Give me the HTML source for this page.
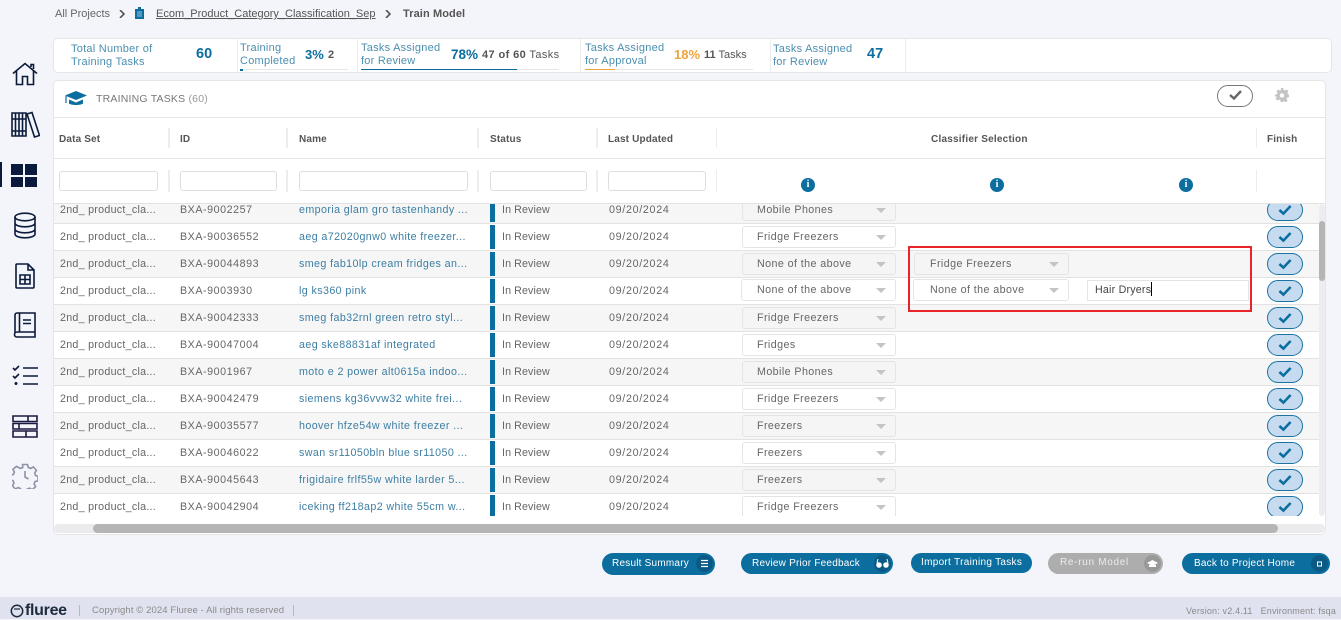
<!DOCTYPE html>
<html><head><meta charset="utf-8">
<style>
*{box-sizing:border-box}
html,body{margin:0;padding:0}
body{width:1341px;height:619px;overflow:hidden;background:#f4f5fa;font-family:"Liberation Sans",sans-serif;font-size:11px;color:#5f5f5f;position:relative}
.a{position:absolute;white-space:nowrap}
.l{color:#4b8fb0;font-size:11px;line-height:13px;letter-spacing:.25px}
.b{color:#0b6e9e;font-weight:bold}
.hd{font-weight:bold;font-size:10px;color:#555;top:133px;line-height:14px;letter-spacing:.15px}
.sep{position:absolute;width:2px;background:#eceded}
.flt{position:absolute;top:171px;height:20px;background:#fff;border:1px solid #dedede;border-radius:3px}
.row{position:absolute;left:54px;width:1265px;height:27px;border-bottom:1px solid #e2e2e2}
.row.g{background:#f6f6f6}.row.w{background:#fff}
.row span{position:absolute;top:0;line-height:26px;white-space:nowrap;font-size:10.7px;color:#666}
.row span:nth-of-type(1){letter-spacing:.27px}
.row span:nth-of-type(2){letter-spacing:.55px}
.row span:nth-of-type(3){letter-spacing:.4px;color:#3d7ea3}
.row span:nth-of-type(4){letter-spacing:.1px}
.row span:nth-of-type(5){letter-spacing:.7px}
.bar{position:absolute;left:436px;top:1px;width:5px;height:24px;background:#0b6e9e}
.sel{position:absolute;height:22px;border:1px solid #e4e4e4;border-radius:3px;line-height:20px;font-size:10.7px;padding-left:14px;color:#666;white-space:nowrap;letter-spacing:.42px}
.sel:after{content:"";position:absolute;right:9px;top:8px;border-left:5px solid transparent;border-right:5px solid transparent;border-top:5px solid #c4c4c4}
.g .sel{background:#f5f5f5}.w .sel{background:#fff}
.chk{position:absolute;left:1213px;top:2px;width:36px;height:22px;background:#c6dbf0;border:1px solid #1a73a0;border-radius:11px}
.chk svg{position:absolute;left:8px;top:3px;transform:scale(.8)}
.chk path{stroke-width:3.2}
.btn{position:absolute;background:#0b6e9e;color:#fff;border-radius:11px;font-size:10px;line-height:22px;height:21px;padding-left:10px;white-space:nowrap;letter-spacing:.22px}
.btn i{position:absolute;right:2px;top:2px;width:17px;height:17px;border-radius:50%;background:#0a5a85}
.inf{position:absolute;top:178px;width:14px;height:14px;border-radius:50%;background:#0b6e9e;color:#fff;font:bold 10px/14px "Liberation Serif",serif;text-align:center}
svg{display:block}
.ic{position:absolute;fill:none;stroke:#0a1a3a;stroke-width:1.6}
</style></head><body>

<div class="a" style="left:55px;top:7px;line-height:14px;font-size:11px;color:#666">All Projects</div>
<svg class="a" style="left:119px;top:10px" width="7" height="8"><path d="M1 0l4 4-4 4" fill="none" stroke="#555" stroke-width="1.6"/></svg>
<svg class="a" style="left:135px;top:7px" width="9" height="12"><path d="M0 2h3V0h3v2h3v10H0z" fill="#0b6e9e"/><path d="M2 5h5M2 7h5M2 9h5" stroke="#cfe3ee" stroke-width=".7"/></svg>
<div class="a" style="left:156px;top:7px;line-height:14px;font-size:11px;color:#555;text-decoration:underline">Ecom_Product_Category_Classification_Sep</div>
<svg class="a" style="left:385px;top:10px" width="7" height="8"><path d="M1 0l4 4-4 4" fill="none" stroke="#555" stroke-width="1.6"/></svg>
<div class="a" style="left:403px;top:7px;line-height:14px;font-size:11px;font-weight:bold;color:#555;letter-spacing:.1px">Train Model</div>

<div class="a" style="left:53px;top:38px;width:1279px;height:35px;background:#fff;border:1px solid #e6e6e6;border-radius:5px"></div>
<div class="sep" style="left:237px;top:39px;height:33px;width:1px"></div>
<div class="sep" style="left:357px;top:39px;height:33px;width:1px"></div>
<div class="sep" style="left:580px;top:39px;height:33px;width:1px"></div>
<div class="sep" style="left:770px;top:39px;height:33px;width:1px"></div>
<div class="sep" style="left:905px;top:39px;height:33px;width:1px"></div>

<div class="a l" style="left:71px;top:43px">Total Number of<br>Training Tasks</div>
<div class="a b" style="left:196px;top:47px;font-size:14.5px;line-height:15px">60</div>
<div class="a l" style="left:240px;top:42px">Training<br>Completed</div>
<div class="a b" style="left:305px;top:47px;font-size:13px;line-height:15px">3%</div>
<div class="a" style="left:328px;top:49px;font-size:11px;font-weight:bold;color:#555">2</div>
<div class="a" style="left:240px;top:69px;width:108px;height:1px;background:#e6e6e6"></div>
<div class="a" style="left:240px;top:69px;width:3px;height:2px;background:#0b6e9e"></div>
<div class="a l" style="left:361px;top:42px">Tasks Assigned<br>for Review</div>
<div class="a b" style="left:451px;top:47px;font-size:13.5px;line-height:15px">78%</div>
<div class="a" style="left:482px;top:49px;font-size:11px;line-height:13px;color:#555;letter-spacing:.4px"><b>47 of 60</b> Tasks</div>
<div class="a" style="left:361px;top:69px;width:198px;height:1px;background:#e6e6e6"></div>
<div class="a" style="left:361px;top:69px;width:156px;height:1px;background:#0b6e9e"></div>
<div class="a l" style="left:585px;top:42px">Tasks Assigned<br>for Approval</div>
<div class="a" style="left:674px;top:47px;font-size:13px;line-height:15px;font-weight:bold;color:#eda33f">18%</div>
<div class="a" style="left:704px;top:49px;font-size:11px;line-height:13px;color:#555"><b>11</b> Tasks</div>
<div class="a" style="left:585px;top:69px;width:168px;height:1px;background:#e6e6e6"></div>
<div class="a" style="left:585px;top:69px;width:30px;height:1px;background:#eda33f"></div>
<div class="a l" style="left:773px;top:43px">Tasks Assigned<br>for Review</div>
<div class="a b" style="left:867px;top:47px;font-size:14.5px;line-height:15px">47</div>

<!-- sidebar -->
<svg class="ic" style="left:12px;top:62px" width="26" height="24" viewBox="0 0 26 24"><path d="M1 11.5L13 1.5l12 10M4.5 9v13.5h6v-8h5v8h6V9M19 5V2.5h2.5V7"/></svg>
<svg class="ic" style="left:10px;top:111px" width="30" height="27" viewBox="0 0 30 27"><path d="M2 2h7v23H2zM9 2h7v23H9zM2 8h14M2 20h14M5.500 2v23M12.500 2v23M17 3l5-1.500 7.500 23-5 1.500z"/></svg>
<div class="a" style="left:0;top:162px;width:2px;height:25px;background:#0a1a3a"></div>
<div class="a" style="left:11px;top:164px;width:12px;height:11px;background:#0a1a3a"></div>
<div class="a" style="left:25px;top:164px;width:12px;height:11px;background:#0a1a3a"></div>
<div class="a" style="left:11px;top:177px;width:12px;height:10px;background:#0a1a3a"></div>
<div class="a" style="left:25px;top:177px;width:12px;height:10px;background:#0a1a3a"></div>
<svg class="ic" style="left:13px;top:212px" width="24" height="27" viewBox="0 0 24 27"><ellipse cx="12" cy="5" rx="10" ry="3.800"/><path d="M2 5v17c0 2.200 4.500 3.800 10 3.800s10-1.600 10-3.800V5M2 11c0 2.200 4.500 3.800 10 3.800S22 13.200 22 11M2 17c0 2.200 4.500 3.800 10 3.800S22 19.200 22 17"/></svg>
<svg class="ic" style="left:15px;top:263px" width="20" height="26" viewBox="0 0 20 26"><path d="M2 1h11l6 6v17a1 1 0 0 1-1 1H2a1 1 0 0 1-1-1V2a1 1 0 0 1 1-1zM13 1v6h6M5 12h10v9H5zM5 16.500h10M10 12v9" /></svg>
<svg class="ic" style="left:13px;top:312px" width="24" height="26" viewBox="0 0 24 26"><path d="M2 21V3a2 2 0 0 1 2-2h18v19H4a2.500 2.500 0 0 0 0 5h18v-5M6.500 1v19M10 8h8M10 11.500h8"/></svg>
<svg class="ic" style="left:12px;top:365px" width="27" height="21" viewBox="0 0 27 21"><path d="M1 3l2 2 4-4M1 11l2 2 4-4M11 3h15M11 11h15M11 19h15"/><circle cx="4" cy="18.500" r="1.500" fill="#0a1a3a" stroke="none"/></svg>
<svg class="ic" style="left:12px;top:415px;stroke:#1a1a40" width="26" height="23" viewBox="0 0 26 23"><path d="M1 1h24v5.500H1zM1 8.500h24V14H1zM1 16h24v6H1zM16 1v5.500M7 8.500V14M14 16v6"/></svg>
<svg class="ic" style="left:12px;top:463px;stroke:#8d92a6" width="26" height="26" viewBox="0 0 26 26"><path d="M10.500 1.500h5l.8 3 2.400 1 2.700-1.600 3 3.500-1.700 2.600.8 2.500 2.500.8v4.500l-2.900.8-1 2.400 1.500 2.700-3.500 3-2.500-1.600-2.500 1-.8 2.400h-5l-.8-2.900-2.400-1-2.700 1.500-3-3.500 1.600-2.500-1-2.500-2.500-.8v-4.500l2.900-.8 1-2.400-1.500-2.700 3.500-3L8.300 5.500l2.500-1zM13 8v6l3.500 2"/></svg>

<!-- main panel -->
<div class="a" style="left:53px;top:80px;width:1273px;height:455px;background:#fff;border:1px solid #e6e6e6;border-radius:5px"></div>
<svg class="a" style="left:64px;top:91px" width="24" height="15" viewBox="0 0 24 15"><path d="M12 0L1 4.500l11 4.500 11-4.500z" fill="#0b6e9e"/><path d="M5 8.500v4c2 2 12 2 14 0v-4l-7 3z" fill="#0b6e9e"/><path d="M2 5v7" stroke="#0b6e9e" stroke-width="1.200"/></svg>
<div class="a" style="left:96px;top:92px;font-size:10.5px;line-height:14px;color:#777;letter-spacing:.2px">TRAINING TASKS <span style="color:#999">(60)</span></div>
<div class="a" style="left:1217px;top:85px;width:36px;height:22px;border:1px solid #777;border-radius:11px;background:#fff"></div>
<svg class="a" style="left:1229px;top:90px" width="13" height="10"><path d="M1 5l4 3.500L12 1" fill="none" stroke="#666" stroke-width="2.400"/></svg>
<svg class="a" style="left:1275px;top:88px" width="14" height="14" viewBox="0 0 16 16"><path d="M6.500 0h3l.4 2.200 1.500.6L13.300 1.600l2 2-1.200 1.900.6 1.500L16 7.500v3l-2.200.400-.6 1.500 1.200 1.900-2 2-1.900-1.200-1.500.6L9.500 16h-3l-.4-2.200-1.500-.6-1.900 1.200-2-2 1.200-1.900-.6-1.500L0 10.500v-3l2.200-.4.6-1.500L1.600 3.700l2-2 1.900 1.200 1.500-.6z" fill="#c4c4c4"/><circle cx="8" cy="8.500" r="2.500" fill="#fff"/></svg>

<div class="a" style="left:54px;top:117px;width:1271px;height:1px;background:#e6e6e6"></div>
<div class="a" style="left:54px;top:158px;width:1271px;height:1px;background:#e6e6e6"></div>
<div class="a" style="left:54px;top:203px;width:1271px;height:1px;background:#e2e2e2"></div>

<div class="a hd" style="left:59px">Data Set</div>
<div class="a hd" style="left:180px">ID</div>
<div class="a hd" style="left:299px">Name</div>
<div class="a hd" style="left:490px">Status</div>
<div class="a hd" style="left:608px">Last Updated</div>
<div class="a hd" style="left:931px;letter-spacing:.22px">Classifier Selection</div>
<div class="a hd" style="left:1267px">Finish</div>

<div class="sep" style="left:168px;top:128px;height:20px"></div><div class="sep" style="left:286px;top:128px;height:20px"></div><div class="sep" style="left:477px;top:128px;height:20px"></div><div class="sep" style="left:596px;top:128px;height:20px"></div><div class="sep" style="left:716px;top:128px;height:20px;width:1px"></div><div class="sep" style="left:1256px;top:128px;height:20px;width:1px"></div>
<div class="sep" style="left:168px;top:170px;height:22px"></div><div class="sep" style="left:286px;top:170px;height:22px"></div><div class="sep" style="left:477px;top:170px;height:22px"></div><div class="sep" style="left:596px;top:170px;height:22px"></div><div class="sep" style="left:716px;top:170px;height:22px;width:1px"></div><div class="sep" style="left:1256px;top:170px;height:22px;width:1px"></div>

<div class="flt" style="left:59px;width:99px"></div>
<div class="flt" style="left:180px;width:97px"></div>
<div class="flt" style="left:299px;width:169px"></div>
<div class="flt" style="left:490px;width:97px"></div>
<div class="flt" style="left:608px;width:98px"></div>
<div class="inf" style="left:801px">i</div><div class="inf" style="left:990px">i</div><div class="inf" style="left:1179px">i</div>

<!-- rows -->
<div class="a" style="left:54px;top:204px;width:1265px;height:312px;overflow:hidden">
<div style="position:absolute;left:-54px;top:-203px;width:1341px;height:619px">
<div class="row g" style="top:196px"><span style="left:6px;top:0">2nd_ product_cla...</span><span style="left:126px">BXA-9002257</span><span style="left:245px">emporia glam gro tastenhandy ...</span><i class="bar"></i><span style="left:448px">In Review</span><span style="left:555px">09/20/2024</span><div class="sel" style="left:688px;top:2px;width:154px">Mobile Phones</div><div class="chk"><svg width="18" height="14"><path d="M2 7l5 4.500L16 2" fill="none" stroke="#0b6e9e" stroke-width="2.600"/></svg></div></div>
<div class="row w" style="top:223px"><span style="left:6px">2nd_ product_cla...</span><span style="left:126px">BXA-90036552</span><span style="left:245px">aeg a72020gnw0 white freezer...</span><i class="bar"></i><span style="left:448px">In Review</span><span style="left:555px">09/20/2024</span><div class="sel" style="left:688px;top:2px;width:154px">Fridge Freezers</div><div class="chk"><svg width="18" height="14"><path d="M2 7l5 4.500L16 2" fill="none" stroke="#0b6e9e" stroke-width="2.600"/></svg></div></div>
<div class="row g" style="top:250px"><span style="left:6px">2nd_ product_cla...</span><span style="left:126px">BXA-90044893</span><span style="left:245px">smeg fab10lp cream fridges an...</span><i class="bar"></i><span style="left:448px">In Review</span><span style="left:555px">09/20/2024</span><div class="sel" style="left:688px;top:2px;width:154px">None of the above</div><div class="sel" style="left:860px;top:2px;width:155px;padding-left:15px">Fridge Freezers</div><div class="chk"><svg width="18" height="14"><path d="M2 7l5 4.500L16 2" fill="none" stroke="#0b6e9e" stroke-width="2.600"/></svg></div></div>
<div class="row w" style="top:277px"><span style="left:6px">2nd_ product_cla...</span><span style="left:126px">BXA-9003930</span><span style="left:245px">lg ks360 pink</span><i class="bar"></i><span style="left:448px">In Review</span><span style="left:555px">09/20/2024</span><div class="sel" style="left:687px;top:1px;width:155px;padding-left:15px">None of the above</div><div class="sel" style="left:859px;top:1px;width:156px;padding-left:16px">None of the above</div><div style="position:absolute;left:1033px;top:2px;width:162px;height:21px;border:1px solid #e4e4e4;background:#fff;padding-left:7px;line-height:19px;font-size:10.7px;color:#444;white-space:nowrap;letter-spacing:.2px">Hair Dryers<b style="display:inline-block;width:1px;height:14px;background:#000;vertical-align:-3px"></b></div><div class="chk"><svg width="18" height="14"><path d="M2 7l5 4.500L16 2" fill="none" stroke="#0b6e9e" stroke-width="2.600"/></svg></div></div>
<div class="row g" style="top:304px"><span style="left:6px">2nd_ product_cla...</span><span style="left:126px">BXA-90042333</span><span style="left:245px">smeg fab32rnl green retro styl...</span><i class="bar"></i><span style="left:448px">In Review</span><span style="left:555px">09/20/2024</span><div class="sel" style="left:688px;top:2px;width:154px">Fridge Freezers</div><div class="chk"><svg width="18" height="14"><path d="M2 7l5 4.500L16 2" fill="none" stroke="#0b6e9e" stroke-width="2.600"/></svg></div></div>
<div class="row w" style="top:331px"><span style="left:6px">2nd_ product_cla...</span><span style="left:126px">BXA-90047004</span><span style="left:245px">aeg ske88831af integrated</span><i class="bar"></i><span style="left:448px">In Review</span><span style="left:555px">09/20/2024</span><div class="sel" style="left:688px;top:2px;width:154px">Fridges</div><div class="chk"><svg width="18" height="14"><path d="M2 7l5 4.500L16 2" fill="none" stroke="#0b6e9e" stroke-width="2.600"/></svg></div></div>
<div class="row g" style="top:358px"><span style="left:6px">2nd_ product_cla...</span><span style="left:126px">BXA-9001967</span><span style="left:245px">moto e 2 power alt0615a indoo...</span><i class="bar"></i><span style="left:448px">In Review</span><span style="left:555px">09/20/2024</span><div class="sel" style="left:688px;top:2px;width:154px">Mobile Phones</div><div class="chk"><svg width="18" height="14"><path d="M2 7l5 4.500L16 2" fill="none" stroke="#0b6e9e" stroke-width="2.600"/></svg></div></div>
<div class="row w" style="top:385px"><span style="left:6px">2nd_ product_cla...</span><span style="left:126px">BXA-90042479</span><span style="left:245px">siemens kg36vvw32 white frei...</span><i class="bar"></i><span style="left:448px">In Review</span><span style="left:555px">09/20/2024</span><div class="sel" style="left:688px;top:2px;width:154px">Fridge Freezers</div><div class="chk"><svg width="18" height="14"><path d="M2 7l5 4.500L16 2" fill="none" stroke="#0b6e9e" stroke-width="2.600"/></svg></div></div>
<div class="row g" style="top:412px"><span style="left:6px">2nd_ product_cla...</span><span style="left:126px">BXA-90035577</span><span style="left:245px">hoover hfze54w white freezer ...</span><i class="bar"></i><span style="left:448px">In Review</span><span style="left:555px">09/20/2024</span><div class="sel" style="left:688px;top:2px;width:154px">Freezers</div><div class="chk"><svg width="18" height="14"><path d="M2 7l5 4.500L16 2" fill="none" stroke="#0b6e9e" stroke-width="2.600"/></svg></div></div>
<div class="row w" style="top:439px"><span style="left:6px">2nd_ product_cla...</span><span style="left:126px">BXA-90046022</span><span style="left:245px">swan sr11050bln blue sr11050 ...</span><i class="bar"></i><span style="left:448px">In Review</span><span style="left:555px">09/20/2024</span><div class="sel" style="left:688px;top:2px;width:154px">Freezers</div><div class="chk"><svg width="18" height="14"><path d="M2 7l5 4.500L16 2" fill="none" stroke="#0b6e9e" stroke-width="2.600"/></svg></div></div>
<div class="row g" style="top:466px"><span style="left:6px">2nd_ product_cla...</span><span style="left:126px">BXA-90045643</span><span style="left:245px">frigidaire frlf55w white larder 5...</span><i class="bar"></i><span style="left:448px">In Review</span><span style="left:555px">09/20/2024</span><div class="sel" style="left:688px;top:2px;width:154px">Freezers</div><div class="chk"><svg width="18" height="14"><path d="M2 7l5 4.500L16 2" fill="none" stroke="#0b6e9e" stroke-width="2.600"/></svg></div></div>
<div class="row w" style="top:493px;height:27px"><span style="left:6px">2nd_ product_cla...</span><span style="left:126px">BXA-90042904</span><span style="left:245px">iceking ff218ap2 white 55cm w...</span><i class="bar"></i><span style="left:448px">In Review</span><span style="left:555px">09/20/2024</span><div class="sel" style="left:688px;top:2px;width:154px;height:26px">Fridge Freezers</div><div class="chk"><svg width="18" height="14"><path d="M2 7l5 4.500L16 2" fill="none" stroke="#0b6e9e" stroke-width="2.600"/></svg></div></div>
</div></div>

<!-- scrollbars -->
<div class="a" style="left:1319px;top:204px;width:6px;height:312px;background:#ededf0;border-radius:3px"></div>
<div class="a" style="left:1319px;top:221px;width:6px;height:60px;background:#b5b5b5;border-radius:3px"></div>
<div class="a" style="left:54px;top:524px;width:1271px;height:9px;background:#ebebee;border-radius:5px"></div>
<div class="a" style="left:93px;top:524px;width:1185px;height:9px;background:#b5b5b5;border-radius:5px"></div>

<!-- red box -->
<div class="a" style="left:908px;top:246px;width:344px;height:66px;border:2px solid #e8262a"></div>

<!-- buttons -->
<div class="btn" style="left:602px;top:553px;width:113px;height:22px;line-height:22px">Result Summary<i><svg width="17" height="17"><path d="M5 5.500h7M5 8.500h7M5 11.500h7" stroke="#fff" stroke-width="1.300"/></svg></i></div>
<div class="btn" style="left:741px;top:553px;width:152px;padding-left:11px">Review Prior Feedback<i><svg width="17" height="17"><circle cx="5" cy="10" r="2.800" fill="#fff"/><circle cx="12" cy="10" r="2.800" fill="#fff"/><path d="M3 8l1-4M14 8l-1-4" stroke="#fff"/></svg></i></div>
<div class="btn" style="left:911px;top:553px;width:121px;height:20px;line-height:20px;letter-spacing:.3px">Import Training Tasks</div>
<div class="btn" style="left:1048px;top:553px;width:115px;background:#adadad;color:#ececec;line-height:20px;padding-left:12px;letter-spacing:.7px">Re-run Model<i style="background:#989898"><svg width="17" height="17"><path d="M3 8l5.500-3L14 8l-5.500 3zM5 10h7v2H5z" fill="#fff"/></svg></i></div>
<div class="btn" style="left:1182px;top:553px;width:148px;padding-left:12px;">Back to Project Home<i><svg width="17" height="17"><rect x="6.500" y="7" width="4" height="4" fill="none" stroke="#fff"/></svg></i></div>

<!-- footer -->
<div class="a" style="left:0;top:597px;width:1341px;height:22px;background:#e0e3ef"></div>
<svg class="a" style="left:10px;top:604px" width="14" height="14"><circle cx="7" cy="7" r="5.700" fill="none" stroke="#1c2b3d" stroke-width="1.500"/><path d="M4 5h6" stroke="#1c2b3d" stroke-width="1.200"/></svg>
<div class="a" style="left:25px;top:602px;font-size:16px;font-weight:bold;line-height:18px;color:#1c2b3d;letter-spacing:-.3px">fluree</div>
<div class="a" style="left:79px;top:605px;width:1px;height:11px;background:#b5b8c4"></div>
<div class="a" style="left:92px;top:605px;font-size:9.500px;line-height:12px;color:#8a8a8a;letter-spacing:.1px">Copyright © 2024 Fluree - All rights reserved</div>
<div class="a" style="left:293px;top:605px;width:1px;height:11px;background:#b5b8c4"></div>
<div class="a" style="left:1186px;top:605px;font-size:9px;line-height:12px;color:#8a8a8a;letter-spacing:.17px">Version: v2.4.11 &nbsp; Environment: fsqa</div>
</body></html>
